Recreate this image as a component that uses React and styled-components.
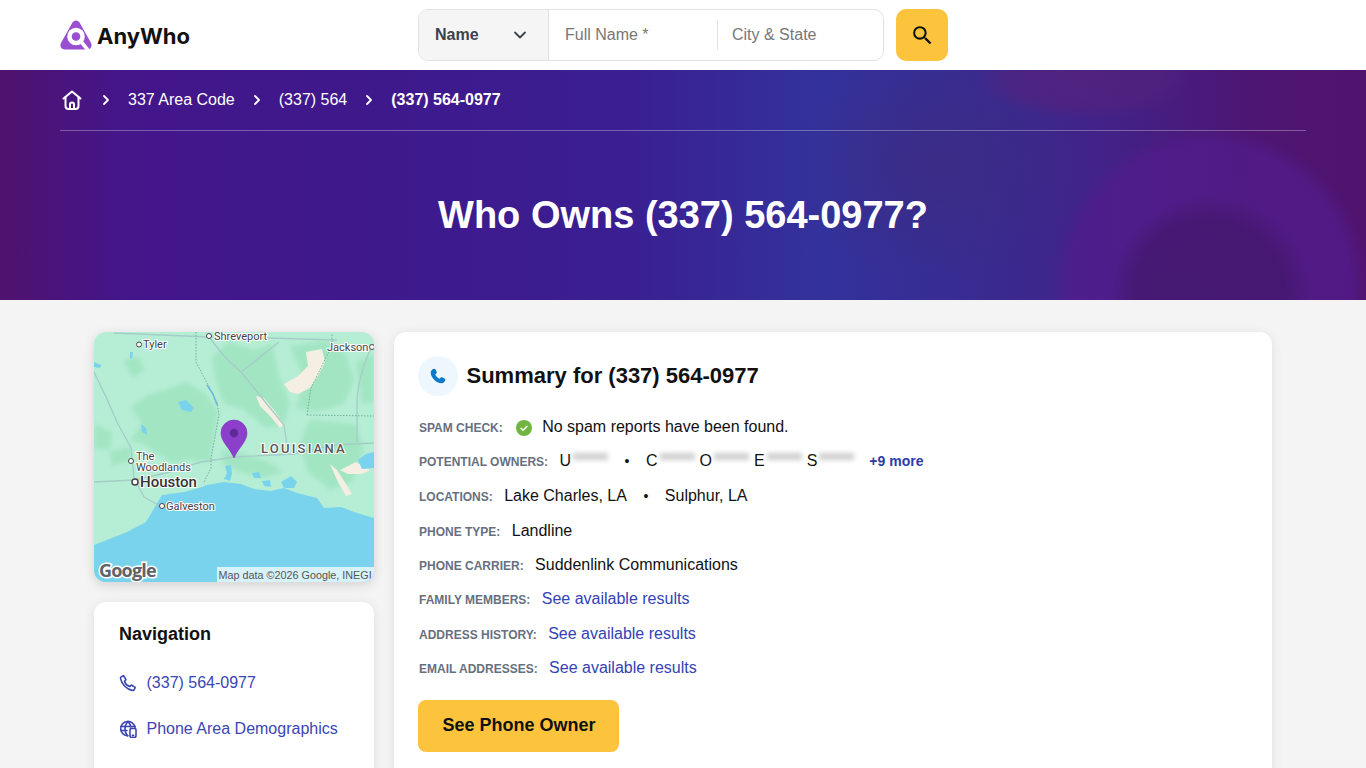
import { ChevronDown } from "lucide-react";
import { MdOutlineSearch } from "react-icons/md";
import styled, { createGlobalStyle } from "styled-components";

const GlobalStyle = createGlobalStyle`
  * {
    box-sizing: border-box;
  }
  html,
  body {
    margin: 0;
    height: 100%;
    overflow: hidden;
    background: #f4f4f4;
    font-family: "Liberation Sans", Arial, sans-serif;
  }
`;

const Header = styled.header`
  height: 70px;
  padding: 0 60px;
  background: #fff;
  display: flex;
  align-items: center;
`;

const Logo = styled.a`
  width: 358px;
  display: flex;
  align-items: center;
  gap: 5px;
  color: #111;
  font-family: Inter, sans-serif;
  font-size: 22px;
  font-weight: 700;
`;

const LogoText = styled.span`
  margin-top: 2px;
`;

const SearchForm = styled.form`
  display: flex;
  gap: 12px;
`;

const Fields = styled.div`
  width: 466px;
  height: 52px;
  display: flex;
  align-items: center;
  background: #fff;
  border: 1px solid #e2e2e2;
  border-radius: 10px;
  overflow: hidden;
`;

const TypeSelect = styled.div`
  width: 130px;
  height: 100%;
  padding: 0 18px 0 16px;
  display: flex;
  align-items: center;
  justify-content: space-between;
  background: #f5f5f5;
  border-right: 1px solid #e2e2e2;
  color: #3c424d;
  font-size: 16px;
  font-weight: 700;
`;

const Field = styled.input`
  width: ${(p) => p.$width}px;
  height: 30px;
  padding: 0 0 0 ${(p) => p.$pad}px;
  border: none;
  border-left: ${(p) => (p.$divided ? "1px solid #e2e2e2" : "none")};
  outline: none;
  background: transparent;
  font-family: inherit;
  font-size: 16px;

  &::placeholder {
    color: #777;
    opacity: 1;
  }
`;

const SearchButton = styled.button`
  width: 52px;
  height: 52px;
  padding: 0;
  border: none;
  border-radius: 10px;
  background: #fcc43d;
  color: #111;
  display: flex;
  align-items: center;
  justify-content: center;
`;

const Hero = styled.section`
  height: 230px;
  padding: 0 60px;
  display: flex;
  flex-direction: column;
  color: #fff;
  background:
    radial-gradient(circle at 1210px 225px, rgba(68, 24, 110, 0.85) 0, rgba(68, 24, 110, 0.8) 75px, transparent 100px),
    radial-gradient(circle at 1210px 215px, rgba(82, 28, 140, 0.75) 0, rgba(82, 28, 140, 0.7) 140px, transparent 158px),
    radial-gradient(ellipse 110px 45px at 1085px 5px, rgba(84, 34, 125, 0.85) 0, rgba(84, 34, 125, 0.6) 70%, transparent 100%),
    radial-gradient(ellipse 150px 120px at 940px 95px, rgba(60, 44, 130, 0.8) 0, transparent 100%),
    linear-gradient(90deg, #50126e 0%, #43168a 9%, #3e198c 28%, #3a1f92 46%, #33329c 60%, #372c92 70%, #412389 80%, #4e1572 92%, #50146f 100%);
`;

const Breadcrumb = styled.nav`
  height: 61px;
  flex: none;
  display: flex;
  align-items: center;
  gap: 18px;
  border-bottom: 1px solid rgba(255, 255, 255, 0.3);
  font-size: 16px;
`;

const Crumb = styled.span`
  font-weight: ${(p) => (p.$current ? 700 : 400)};
`;

const HeroTitle = styled.h1`
  flex: 1;
  margin: 0;
  display: flex;
  align-items: center;
  justify-content: center;
  font-size: 38px;
  font-weight: 700;
`;

const Main = styled.main`
  width: 1178px;
  margin: 0 auto;
  padding-top: 32px;
  display: flex;
  gap: 20px;
  align-items: flex-start;
`;

const Sidebar = styled.aside`
  width: 280px;
  flex: none;
  display: flex;
  flex-direction: column;
  gap: 20px;
`;

const MapCard = styled.div`
  height: 250px;
  border-radius: 12px;
  overflow: hidden;
  box-shadow: 0 3px 12px rgba(0, 0, 0, 0.14);

  svg {
    display: block;
  }
`;

const Card = styled.div`
  background: #fff;
  border-radius: 12px;
  box-shadow: 0 2px 12px rgba(0, 0, 0, 0.09);
`;

const NavCard = styled(Card)`
  height: 300px;
  padding: 21px 25px;
`;

const NavTitle = styled.h3`
  margin: 0 0 26px;
  color: #111;
  font-size: 18px;
  line-height: 22px;
  font-weight: 700;
`;

const NavLink = styled.a`
  height: 24px;
  margin-bottom: 22px;
  display: flex;
  align-items: center;
  gap: 9.500px;
  color: #3a46b4;
  font-size: 16px;
`;

const SummaryCard = styled(Card)`
  flex: 1;
  height: 520px;
  padding: 24px;
`;

const SummaryHead = styled.div`
  margin-bottom: 19px;
  display: flex;
  align-items: center;
  gap: 8.500px;
`;

const IconCircle = styled.span`
  width: 40px;
  height: 40px;
  border-radius: 50%;
  background: #eef7fd;
  display: flex;
  align-items: center;
  justify-content: center;
`;

const SummaryTitle = styled.h2`
  margin: 0;
  color: #111;
  font-size: 22px;
  font-weight: 700;
`;

const Rows = styled.div`
  display: flex;
  flex-direction: column;
  gap: 10.43px;
`;

const Row = styled.div`
  height: 24px;
  margin-bottom: ${(p) => p.$extra || 0}px;
  display: flex;
  align-items: baseline;
  gap: 11.400px;
  color: #111;
  font-size: 16px;
  line-height: 24px;
`;

const Label = styled.span`
  padding-left: 1px;
  color: #667080;
  font-size: 12px;
  font-weight: 700;
  text-transform: uppercase;
`;

const CheckBadge = styled.svg`
  width: 16px;
  height: 16px;
  margin: 0 -1.400px 0 2px;
  align-self: center;
  position: relative;
  top: 1px;
`;

const Bullet = styled.span`
  margin: 0 16.500px;
  font-size: 14px;
`;

const Inline = styled.span`
  display: flex;
  align-items: baseline;
`;

const Initial = styled.span`
  margin-right: 2px;
`;

const Redacted = styled.span`
  width: 35px;
  height: 7px;
  margin-right: ${(p) => p.$after || 0}px;
  display: inline-block;
  position: relative;
  top: -6px;
  background: #cfcfcf;
  filter: blur(2.500px);
`;

const More = styled.a`
  margin-left: 15px;
  color: #2d3ba8;
  font-size: 14px;
  font-weight: 700;
`;

const ResultLink = styled.a`
  color: #3343b5;
`;

const OwnerButton = styled.button`
  width: 201px;
  height: 52px;
  margin-top: 20px;
  padding: 0 0 2px 1px;
  border: none;
  border-radius: 8px;
  background: #fcc43d;
  color: #111;
  font-family: inherit;
  font-size: 18px;
  font-weight: 700;
`;

const LogoMark = () => (
  <svg width="32" height="30" viewBox="0 0 32 30">
    <path
      d="M12.500 2.500C14.300-.2 17.800-.2 19.500 2.500L30.800 22.500C32.600 25.800 31 29.500 27.500 29.500H4.500C1 29.500-.6 25.800 1.200 22.500Z"
      fill="#9a4fd0"
    />
    <circle cx="16" cy="16.500" r="8.800" fill="#fff" />
    <circle cx="16" cy="16.500" r="4.300" fill="#9a4fd0" />
    <path d="M20.500 21L27 29" stroke="#fff" strokeWidth="3.600" strokeLinecap="round" />
  </svg>
);

const HomeIcon = () => (
  <svg width="24" height="24" viewBox="0 0 24 24" fill="none" stroke="#fff" strokeWidth="2" strokeLinejoin="round" strokeLinecap="round">
    <path d="M3.500 10.500L12 3.500l8.500 7" />
    <path d="M5.500 9.500V18a3 3 0 0 0 3 3h7a3 3 0 0 0 3-3V9.500" />
    <path d="M10 21v-4.500a2 2 0 0 1 4 0V21" />
  </svg>
);

const Chevron = () => (
  <svg width="8" height="12" viewBox="0 0 8 12" fill="none" stroke="#fff" strokeWidth="1.800" strokeLinecap="round" strokeLinejoin="round">
    <path d="M2 2l4 4-4 4" />
  </svg>
);

const PhoneOutline = () => (
  <svg width="18" height="18" viewBox="0 0 18 18" fill="none" stroke="#3a46b4" strokeWidth="1.600" strokeLinejoin="round" strokeLinecap="round">
    <path d="M2.200 2.800L4.600 1.800 7 5.600 5.400 7.200C6.200 9.600 8.400 11.800 10.800 12.600L12.400 11 16.200 13.400 15.200 15.800C14.800 16.400 14 16.600 13.200 16.400 7.600 15.200 2.800 10.400 1.600 4.800 1.400 4 1.600 3.200 2.200 2.800Z" />
  </svg>
);

const GlobePhone = () => (
  <svg width="18" height="18" viewBox="0 0 18 18" fill="none" stroke="#3a46b4" strokeWidth="1.600" strokeLinecap="round" strokeLinejoin="round">
    <path d="M9 15.800A7.200 7.200 0 1 1 16 7.500" />
    <path d="M1.900 6.500H16M1.900 10.500H8" />
    <path d="M8.800 1.800C5 5.500 5 11.500 8.500 15.800M9.200 1.800C10.600 3.200 11.500 5 11.800 7" />
    <rect x="11" y="8.500" width="6" height="8.800" rx="1.200" fill="#fff" />
    <path d="M13.300 15.200h1.400" />
  </svg>
);

const PhoneFilled = () => (
  <svg width="18" height="18" viewBox="0 0 24 24" fill="#0b78c8">
    <path d="M6.600 2.300c.7-.3 1.500 0 1.900.7l1.800 3.500c.3.600.2 1.400-.3 1.900L8.300 10c1 2.300 3.300 4.800 5.700 5.800l1.700-1.700c.5-.5 1.200-.6 1.900-.3l3.500 1.700c.7.400 1 1.200.7 1.900-.8 2.300-2.700 4.500-5.300 4.300C9.500 21.200 2.800 14.500 2.300 7.600c-.2-2.500 2-4.500 4.300-5.300Z" />
  </svg>
);

const MapPicture = () => (
  <svg width="280" height="250" viewBox="0 0 280 250" fontFamily="Roboto, sans-serif">
    <rect width="280" height="250" fill="#b6eed5" />
    <g fill="#a2e5c3" filter="blur(2px)">
      <path d="M37 75L55 62 72 58 92 50 112 62 124 80 120 105 116 130 95 128 80 132 62 122 50 112 36 108 48 92Z" />
      <path d="M118 25L135 10 160 18 178 12 185 45 196 72 190 92 172 96 150 78 130 72 122 50Z" />
      <path d="M196 14L232 8 252 22 260 48 250 72 222 80 202 76 210 48Z" />
      <path d="M216 88L262 92 270 118 258 150 236 158 214 140 205 112Z" />
      <path d="M15 120L38 114 36 128 18 134Z" />
      <path d="M30 28L44 24 50 38 38 46Z" />
      <path d="M128 118L150 122 174 130 190 140 168 146 146 140 128 132Z" />
      <path d="M262 30L280 22V70L268 72Z" />
      <path d="M0 92L18 100 16 118 0 116Z" />
    </g>
    <g fill="#f4efe2" filter="blur(0.700px)">
      <path d="M162 64L170 66 180 78 190 92 186 96 176 84 166 74Z" />
      <path d="M212 20L228 17 231 30 224 44 216 56 204 62 196 60 190 52 204 44 214 34Z" />
      <path d="M236 132L243 138 252 152 258 162 252 164 244 150Z" />
      <path d="M246 138L262 130 276 138 268 142 254 142Z" />
    </g>
    <path
      d="M0 213L13 208 33 200 52 190 62 173 68 163 90 160 105 156 113 153 130 150 147 152 160 157 177 159 190 156 203 161 223 166 230 176 247 175 260 180 280 186V250H0Z"
      fill="#79d3ec"
      filter="blur(0.400px)"
    />
    <g fill="#79d3ec" filter="blur(0.500px)">
      <path d="M131 134L137 133 138 142 136 149 130 147 133 141Z" />
      <path d="M158 141L165 140 167 146 160 146Z" />
      <path d="M168 149L176 148 177 155 170 154Z" />
      <path d="M187 150L197 144 203 150 200 156 190 156Z" />
      <path d="M264 128L272 122 280 120V136L268 137Z" />
      <path d="M47 92L52 96 53 103 48 100Z" />
      <path d="M84 70L92 68 100 76 97 80 88 78Z" />
      <path d="M0 30L7 33 6 36 0 35Z" />
      <path d="M36 20L39 20 38 27 36 26Z" />
    </g>
    <g fill="none" stroke="#a5cdc8" strokeWidth="1.400" strokeLinejoin="round">
      <path d="M0 150L40 148 72 141 107 130 140 125 200 122 240 113 280 111" />
      <path d="M20 1L115 5 175 6 243 8" />
      <path d="M115 5L130 24 147 40 168 66 190 93 193 113" />
      <path d="M0 40L12 65 23 90 37 116 40 146 50 165 66 174" />
      <path d="M277 16C266 40 263 60 263 73V110" />
      <path d="M147 40L160 30 185 10" />
    </g>
    <g fill="none" stroke="#5f9f8c" strokeWidth="0.800" strokeDasharray="1.500 1.500">
      <path d="M102 0V30L123 70 125 83 117 126 117 136 110 150" />
      <path d="M213 83L280 84" />
      <path d="M213 83L217 56 238 13V1" />
    </g>
    <path d="M113 53L119 62 123 73" fill="none" stroke="#6db8de" strokeWidth="1.600" />
    <g fill="#fff" stroke="#444" strokeWidth="1">
      <circle cx="45" cy="12.500" r="2.500" />
      <circle cx="115" cy="4" r="2.500" />
      <circle cx="37" cy="129" r="2.500" />
      <circle cx="41" cy="150" r="3" strokeWidth="1.500" />
      <circle cx="68" cy="174" r="2.500" />
      <circle cx="278" cy="15" r="2.500" />
    </g>
    <g fill="#444" stroke="#fff" strokeWidth="2" paintOrder="stroke" fontSize="11">
      <text x="49" y="16">Tyler</text>
      <text x="120" y="8">Shreveport</text>
      <text x="233" y="19">Jackson</text>
      <text x="42" y="128">The</text>
      <text x="42" y="139">Woodlands</text>
      <text x="72" y="178">Galveston</text>
      <text x="46" y="155" fontSize="15" fontWeight="500" fill="#333">Houston</text>
      <text x="167" y="121" fontSize="13" letterSpacing="2.200" fontWeight="500" fill="#555">LOUISIANA</text>
    </g>
    <path
      d="M140 126C136 116 127 110 127 101A13 13 0 0 1 153 101C153 110 144 116 140 126Z"
      fill="#8b3fcb"
      stroke="#7a32b5"
      strokeWidth="0.600"
    />
    <circle cx="140" cy="101" r="4.200" fill="#5e2a96" />
    <text x="5" y="245" fontSize="18" fontWeight="700" fontFamily="'Open Sans', sans-serif" letterSpacing="-0.800" fill="#5f6368" stroke="#fff" strokeWidth="3" paintOrder="stroke">
      Google
    </text>
    <rect x="123" y="235" width="157" height="15" fill="#fff" opacity="0.7" />
    <text x="124.500" y="247" fontSize="10.800" fill="#555" fontFamily="'Liberation Sans', sans-serif">
      Map data ©2026 Google, INEGI
    </text>
  </svg>
);

const App = () => {
  return (
    <>
      <GlobalStyle />
      <Header>
        <Logo>
          <LogoMark />
          <LogoText>AnyWho</LogoText>
        </Logo>
        <SearchForm>
          <Fields>
            <TypeSelect>
              Name
              <ChevronDown size={20} strokeWidth={2.200} color="#3c424d" />
            </TypeSelect>
            <Field $width={168} $pad={16} placeholder="Full Name *" />
            <Field $width={166} $pad={14} $divided placeholder="City & State" />
          </Fields>
          <SearchButton type="button">
            <MdOutlineSearch size={25} />
          </SearchButton>
        </SearchForm>
      </Header>

      <Hero>
        <Breadcrumb>
          <HomeIcon />
          <Chevron />
          <Crumb>337 Area Code</Crumb>
          <Chevron />
          <Crumb>(337) 564</Crumb>
          <Chevron />
          <Crumb $current>(337) 564-0977</Crumb>
        </Breadcrumb>
        <HeroTitle>Who Owns (337) 564-0977?</HeroTitle>
      </Hero>

      <Main>
        <Sidebar>
          <MapCard>
            <MapPicture />
          </MapCard>
          <NavCard>
            <NavTitle>Navigation</NavTitle>
            <NavLink>
              <PhoneOutline />
              (337) 564-0977
            </NavLink>
            <NavLink>
              <GlobePhone />
              Phone Area Demographics
            </NavLink>
          </NavCard>
        </Sidebar>

        <SummaryCard>
          <SummaryHead>
            <IconCircle>
              <PhoneFilled />
            </IconCircle>
            <SummaryTitle>Summary for (337) 564-0977</SummaryTitle>
          </SummaryHead>
          <Rows>
            <Row>
              <Label>Spam Check:</Label>
              <CheckBadge viewBox="0 0 16 16">
                <circle cx="8" cy="8" r="8" fill="#6fb53f" />
                <path d="M5 8.200l2.100 2.100L11 6.200" fill="none" stroke="#fff" strokeWidth="1.500" strokeLinecap="round" strokeLinejoin="round" />
              </CheckBadge>
              <span>No spam reports have been found.</span>
            </Row>
            <Row>
              <Label>Potential Owners:</Label>
              <Inline>
                <Initial>U</Initial>
                <Redacted />
                <Bullet>•</Bullet>
                <Initial>C</Initial>
                <Redacted $after={5} />
                <Initial>O</Initial>
                <Redacted $after={5} />
                <Initial>E</Initial>
                <Redacted $after={5} />
                <Initial>S</Initial>
                <Redacted />
                <More>+9 more</More>
              </Inline>
            </Row>
            <Row $extra={0.25}>
              <Label>Locations:</Label>
              <Inline>
                Lake Charles, LA
                <Bullet>•</Bullet>
                Sulphur, LA
              </Inline>
            </Row>
            <Row>
              <Label>Phone Type:</Label>
              <span>Landline</span>
            </Row>
            <Row>
              <Label>Phone Carrier:</Label>
              <span>Suddenlink Communications</span>
            </Row>
            <Row>
              <Label>Family Members:</Label>
              <ResultLink>See available results</ResultLink>
            </Row>
            <Row>
              <Label>Address History:</Label>
              <ResultLink>See available results</ResultLink>
            </Row>
            <Row>
              <Label>Email Addresses:</Label>
              <ResultLink>See available results</ResultLink>
            </Row>
          </Rows>
          <OwnerButton type="button">See Phone Owner</OwnerButton>
        </SummaryCard>
      </Main>
    </>
  );
};

export default App;
